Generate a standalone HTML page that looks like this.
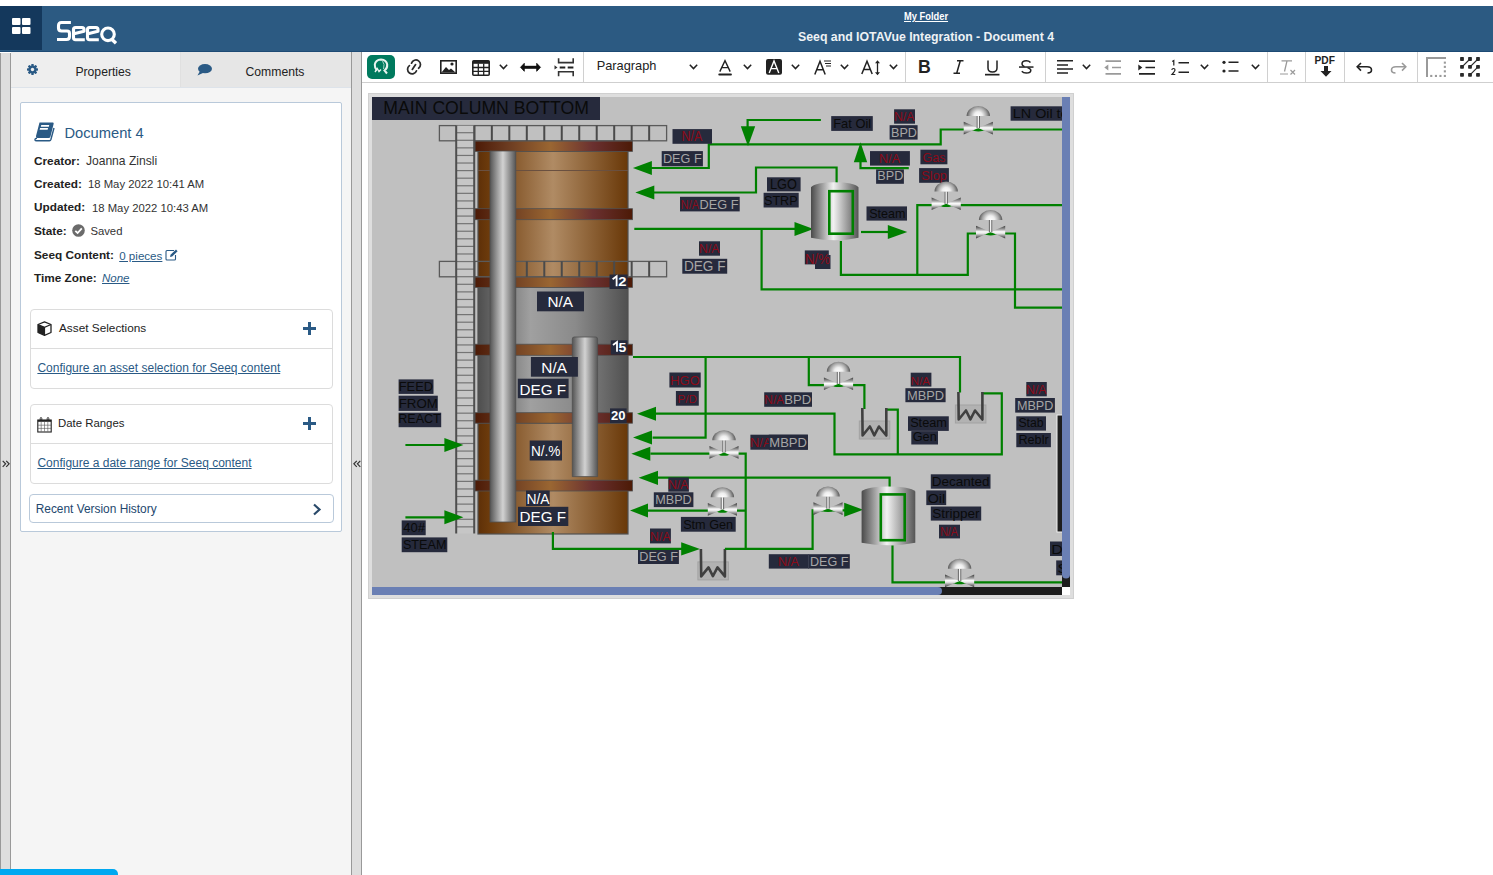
<!DOCTYPE html>
<html><head><meta charset="utf-8"><title>Seeq</title>
<style>
html,body{margin:0;padding:0;}
body{width:1493px;height:875px;overflow:hidden;position:relative;background:#fff;font-family:"Liberation Sans", sans-serif;}
.t{position:absolute;white-space:nowrap;}
.b{position:absolute;box-sizing:border-box;}
.s{position:absolute;overflow:visible;}
</style></head><body>
<div class="b" style="left:0px;top:6px;width:1493px;height:46px;background:#2c5a82;"></div>
<div class="b" style="left:0px;top:51px;width:1493px;height:1px;background:#1d4a74;"></div>
<div class="b" style="left:0px;top:6px;width:42px;height:44px;background:#14385c;"></div>
<svg class="s" style="left:12px;top:18px;" width="19" height="16" viewBox="0 0 19 16"><rect x="0" y="0" width="8.5" height="7" rx="1" fill="#fff"/><rect x="10" y="0" width="8.5" height="7" rx="1" fill="#fff"/><rect x="0" y="9" width="8.5" height="7" rx="1" fill="#fff"/><rect x="10" y="9" width="8.5" height="7" rx="1" fill="#fff"/></svg>
<svg class="s" style="left:57px;top:20px;" width="62" height="25" viewBox="0 0 62 25"><g fill="none" stroke="#fff" stroke-width="3.1" stroke-linejoin="round">
<path d="M13.9 2.5 H4.5 Q1.5 2.5 1.5 5.5 V8 Q1.5 11 4.5 11 H10 Q12.5 11 12.5 13.5 V16.5 Q12.5 19.5 9.5 19.5 H0"/>
<path d="M27.8 19.7 H18.5 Q16.5 19.7 16.5 17.5 V9.5 Q16.5 7.5 18.5 7.5 H25 Q27 7.5 27 9.5 V11.2 L17 13.8"/>
<path d="M41.8 19.7 H32.5 Q30.5 19.7 30.5 17.5 V9.5 Q30.5 7.5 32.5 7.5 H39 Q41 7.5 41 9.5 V11.2 L31 13.8"/>
<circle cx="51" cy="14.3" r="6.3"/>
<path d="M54.5 19 L59 23.3" stroke-width="3.3"/>
</g>
<path d="M52.5 9.3 A 5 5 0 0 1 52.5 19.3" fill="none" stroke="#fff" stroke-width="0.8"/></svg>
<div class="t" style="left:904.00px;top:11.23px;font-size:10.6px;line-height:10.6px;color:#fff;font-weight:bold;font-style:normal;text-decoration:underline;transform:scaleX(0.88);transform-origin:0 0;">My Folder</div>
<div class="t" style="left:798.00px;top:30.59px;font-size:12.3px;line-height:12.3px;color:#eef2f5;font-weight:bold;font-style:normal;text-decoration:none;">Seeq and IOTAVue Integration - Document 4</div>
<div class="b" style="left:0px;top:52px;width:11px;height:823px;background:#dedede;border-left:1px solid #999;border-right:1px solid #999;"></div>
<div class="b" style="left:0px;top:52px;width:11px;height:1px;background:#fff;"></div>
<div class="b" style="left:11px;top:53px;width:340px;height:822px;background:#f5f5f5;"></div>
<div class="b" style="left:11px;top:52px;width:170px;height:35px;background:#eeeeee;border-right:1px solid #e0e0e0;"></div>
<div class="b" style="left:181px;top:52px;width:170px;height:36px;background:#e6e6e6;"></div>
<div class="b" style="left:11px;top:87px;width:340px;height:1px;background:#dde3ea;"></div>
<svg class="s" style="left:27px;top:64px;" width="11" height="11" viewBox="0 0 11 11"><g fill="#2a5a85"><circle cx="5.5" cy="5.5" r="3.9"/><rect x="4.3" y="0" width="2.4" height="11" rx="0.6" transform="rotate(0 5.5 5.5)"/><rect x="4.3" y="0" width="2.4" height="11" rx="0.6" transform="rotate(45 5.5 5.5)"/><rect x="4.3" y="0" width="2.4" height="11" rx="0.6" transform="rotate(90 5.5 5.5)"/><rect x="4.3" y="0" width="2.4" height="11" rx="0.6" transform="rotate(135 5.5 5.5)"/></g><circle cx="5.5" cy="5.5" r="1.7" fill="#eeeeee"/></svg>
<div class="t" style="left:75.40px;top:65.67px;font-size:12.2px;line-height:12.2px;color:#222;font-weight:normal;font-style:normal;text-decoration:none;">Properties</div>
<svg class="s" style="left:197px;top:64px;" width="15" height="12" viewBox="0 0 15 12"><ellipse cx="8" cy="4.7" rx="7" ry="4.6" fill="#2a5a85"/><path d="M3 7 L0.5 11.5 L7 8.5 Z" fill="#2a5a85"/></svg>
<div class="t" style="left:245.50px;top:65.67px;font-size:12.2px;line-height:12.2px;color:#222;font-weight:normal;font-style:normal;text-decoration:none;">Comments</div>
<div class="b" style="left:351px;top:52px;width:11px;height:823px;background:#dedede;border-left:1px solid #999;border-right:1px solid #999;"></div>
<svg class="s" style="left:353px;top:459.5px;" width="8" height="8" viewBox="0 0 8 8"><path d="M3.8 0.8 L0.9 3.8 L3.8 6.8 M7.3 0.8 L4.4 3.8 L7.3 6.8" fill="none" stroke="#333" stroke-width="1.2"/></svg>
<svg class="s" style="left:2px;top:459.5px;" width="8" height="8" viewBox="0 0 8 8"><path d="M0.7 0.8 L3.6 3.8 L0.7 6.8 M4.2 0.8 L7.1 3.8 L4.2 6.8" fill="none" stroke="#333" stroke-width="1.2"/></svg>
<div class="b" style="left:20px;top:102px;width:322px;height:430px;background:#fff;border:1px solid #b9c9da;border-radius:2px;"></div>
<svg class="s" style="left:34px;top:122px;" width="21" height="19" viewBox="0 0 21 19"><path d="M5.5 0.5 H19 Q20 0.5 19.6 2 L16.5 14.5 Q16 16 14.5 16 H3.5 Q1.5 16 2 14 Z" fill="#2a5a85"/>
<rect x="8" y="3" width="8" height="1.8" fill="#fff" transform="skewX(-14)" />
<rect x="7.6" y="6" width="8" height="1.8" fill="#fff" transform="skewX(-14)"/>
<path d="M3 16.3 Q0.8 16.3 1 18 Q1.2 18.8 2.6 18.8 H15.5 Q16.5 18.8 16.9 17.5 L20 6" fill="none" stroke="#2a5a85" stroke-width="1.4"/></svg>
<div class="t" style="left:64.50px;top:126.26px;font-size:14.7px;line-height:14.7px;color:#2a5a85;font-weight:normal;font-style:normal;text-decoration:none;">Document 4</div>
<div class="t" style="left:34.00px;top:155.61px;font-size:11.8px;line-height:11.8px;color:#222;font-weight:bold;font-style:normal;text-decoration:none;">Creator:</div>
<div class="t" style="left:85.90px;top:155.36px;font-size:12.1px;line-height:12.1px;color:#333;font-weight:normal;font-style:normal;text-decoration:none;">Joanna Zinsli</div>
<div class="t" style="left:34.00px;top:179.01px;font-size:11.8px;line-height:11.8px;color:#222;font-weight:bold;font-style:normal;text-decoration:none;">Created:</div>
<div class="t" style="left:88.00px;top:179.43px;font-size:11.3px;line-height:11.3px;color:#333;font-weight:normal;font-style:normal;text-decoration:none;">18 May 2022 10:41 AM</div>
<div class="t" style="left:34.00px;top:202.41px;font-size:11.8px;line-height:11.8px;color:#222;font-weight:bold;font-style:normal;text-decoration:none;">Updated:</div>
<div class="t" style="left:92.00px;top:202.83px;font-size:11.3px;line-height:11.3px;color:#333;font-weight:normal;font-style:normal;text-decoration:none;">18 May 2022 10:43 AM</div>
<div class="t" style="left:34.00px;top:226.01px;font-size:11.8px;line-height:11.8px;color:#222;font-weight:bold;font-style:normal;text-decoration:none;">State:</div>
<div class="t" style="left:34.00px;top:250.01px;font-size:11.8px;line-height:11.8px;color:#222;font-weight:bold;font-style:normal;text-decoration:none;">Seeq Content:</div>
<div class="t" style="left:34.00px;top:273.21px;font-size:11.8px;line-height:11.8px;color:#222;font-weight:bold;font-style:normal;text-decoration:none;">Time Zone:</div>
<svg class="s" style="left:72px;top:224px;" width="13" height="13" viewBox="0 0 13 13"><circle cx="6.5" cy="6.5" r="6.3" fill="#6b6b6b"/><path d="M3.3 6.8 L5.6 9 L9.8 4.3" fill="none" stroke="#fff" stroke-width="1.8"/></svg>
<div class="t" style="left:90.40px;top:226.43px;font-size:11.3px;line-height:11.3px;color:#333;font-weight:normal;font-style:normal;text-decoration:none;">Saved</div>
<div class="t" style="left:119.20px;top:250.18px;font-size:11.6px;line-height:11.6px;color:#2a5a85;font-weight:normal;font-style:normal;text-decoration:underline;">0 pieces</div>
<svg class="s" style="left:165px;top:249px;" width="13" height="12" viewBox="0 0 13 12"><path d="M9 1.5 H2 Q1 1.5 1 2.5 V10 Q1 11 2 11 H9.5 Q10.5 11 10.5 10 V6" fill="none" stroke="#2a5a85" stroke-width="1.1"/><path d="M5 8 L5.5 5.8 L11 0.6 L12.6 2.2 L7.2 7.5 Z" fill="#2a5a85"/></svg>
<div class="t" style="left:102.00px;top:273.47px;font-size:11.5px;line-height:11.5px;color:#2a5a85;font-weight:normal;font-style:italic;text-decoration:underline;">None</div>
<div class="b" style="left:30px;top:309px;width:303px;height:80px;background:#fff;border:1px solid #dcdcdc;border-radius:4px;"></div>
<div class="b" style="left:31px;top:348px;width:301px;height:1px;background:#dcdcdc;"></div>
<svg class="s" style="left:37px;top:321px;" width="15" height="15" viewBox="0 0 15 15"><path d="M7.5 0.8 L14 3.5 V11.5 L7.5 14.3 L1 11.5 V3.5 Z" fill="none" stroke="#222" stroke-width="1.3" stroke-linejoin="round"/><path d="M1 3.5 L7.5 6.3 L14 3.5 M7.5 6.3 V14.3" fill="none" stroke="#222" stroke-width="1.2"/><path d="M1 3.5 L7.5 6.3 V14.3 L1 11.5 Z" fill="#222"/></svg>
<div class="t" style="left:59.00px;top:323.01px;font-size:11.8px;line-height:11.8px;color:#222;font-weight:normal;font-style:normal;text-decoration:none;">Asset Selections</div>
<svg class="s" style="left:303px;top:322px;" width="13" height="13" viewBox="0 0 13 13"><path d="M6.5 0 V13 M0 6.5 H13" stroke="#2a5a85" stroke-width="3"/></svg>
<div class="t" style="left:37.40px;top:361.84px;font-size:12.0px;line-height:12.0px;color:#2a5a85;font-weight:normal;font-style:normal;text-decoration:underline;">Configure an asset selection for Seeq content</div>
<div class="b" style="left:30px;top:404px;width:303px;height:80px;background:#fff;border:1px solid #dcdcdc;border-radius:4px;"></div>
<div class="b" style="left:31px;top:443px;width:301px;height:1px;background:#dcdcdc;"></div>
<svg class="s" style="left:37px;top:417px;" width="15" height="15" viewBox="0 0 15 15"><rect x="0.8" y="3" width="13.4" height="12" fill="none" stroke="#222" stroke-width="1.1"/><rect x="0.8" y="3" width="13.4" height="1.8" fill="#222"/><path d="M3.2 4 V1.5 Q3.2 0.5 4 0.5 Q4.8 0.5 4.8 1.5 V4 M10.2 4 V1.5 Q10.2 0.5 11 0.5 Q11.8 0.5 11.8 1.5 V4" fill="none" stroke="#222" stroke-width="0.9"/><path d="M4.2 5 V14.5 M7.5 5 V14.5 M10.8 5 V14.5 M0.8 8.2 H14.2 M0.8 11.4 H14.2" stroke="#555" stroke-width="0.6"/></svg>
<div class="t" style="left:58.00px;top:418.35px;font-size:11.4px;line-height:11.4px;color:#222;font-weight:normal;font-style:normal;text-decoration:none;">Date Ranges</div>
<svg class="s" style="left:303px;top:417px;" width="13" height="13" viewBox="0 0 13 13"><path d="M6.5 0 V13 M0 6.5 H13" stroke="#2a5a85" stroke-width="3"/></svg>
<div class="t" style="left:37.40px;top:456.84px;font-size:12.0px;line-height:12.0px;color:#2a5a85;font-weight:normal;font-style:normal;text-decoration:underline;">Configure a date range for Seeq content</div>
<div class="b" style="left:29px;top:494px;width:305px;height:29px;background:#fff;border:1px solid #b9c9da;border-radius:4px;"></div>
<div class="t" style="left:35.70px;top:503.63px;font-size:11.9px;line-height:11.9px;color:#23476e;font-weight:normal;font-style:normal;text-decoration:none;">Recent Version History</div>
<svg class="s" style="left:312px;top:503px;" width="10" height="13" viewBox="0 0 10 13"><path d="M2 1.5 L7.5 6.5 L2 11.5" fill="none" stroke="#2a4a6a" stroke-width="2.2"/></svg>
<div class="b" style="left:0px;top:869px;width:118px;height:10px;background:#00a8f0;border-radius:0 5px 0 0;"></div>
<div class="b" style="left:362px;top:52px;width:1131px;height:30px;background:#fff;"></div>
<div class="b" style="left:362px;top:82px;width:1131px;height:1px;background:#cfcfcf;"></div>
<div class="b" style="left:367px;top:55px;width:28px;height:24px;background:#007a5e;border-radius:5px;"></div>
<svg class="s" style="left:373px;top:58px;" width="16" height="17" viewBox="0 0 16 17"><path d="M4 12.5 Q1.5 10 1.8 6.5 Q2.5 1.8 8 1.5 Q13.5 1.8 14.2 6.5 Q14.5 10.5 11.5 12.5 L14 15.5" fill="none" stroke="#e8f3ef" stroke-width="2"/><path d="M2 14 L4.3 10.5 L6 13.5 L8 11.5" fill="none" stroke="#e8f3ef" stroke-width="1.4"/><path d="M9.5 3 Q12 6 10.5 11" fill="none" stroke="#9fd0c0" stroke-width="1"/></svg>
<svg class="s" style="left:404px;top:57px;" width="20" height="20" viewBox="0 0 20 20"><g fill="none" stroke="#2c2c2c" stroke-width="1.75" stroke-linecap="round"><path d="M7.5 6.2 A4.6 4.6 0 1 1 14.6 11.3"/><path d="M12.5 13.8 A4.6 4.6 0 1 1 5.4 8.6"/><path d="M8.3 12.4 L11.6 7.6"/></g></svg>
<svg class="s" style="left:440px;top:60px;" width="17" height="14" viewBox="0 0 17 14"><rect x="0.8" y="0.8" width="15.4" height="12.4" fill="none" stroke="#222" stroke-width="1.6"/><path d="M1.5 12.5 L6 7 L9 10 L11 8.5 L15.5 12.5 Z" fill="#222"/><circle cx="12" cy="4" r="1.6" fill="#222"/></svg>
<svg class="s" style="left:472px;top:59.5px;" width="18" height="16" viewBox="0 0 18 16"><rect x="0.8" y="0.8" width="16.4" height="14.4" rx="1" fill="none" stroke="#222" stroke-width="1.6"/><rect x="0.8" y="0.8" width="16.4" height="3" fill="#222"/><path d="M6.3 3.5 V15 M11.7 3.5 V15 M0.8 7.5 H17 M0.8 11.3 H17" stroke="#222" stroke-width="1.3"/></svg>
<svg class="s" style="left:498.5px;top:64.3px;" width="9" height="6" viewBox="0 0 9 6"><path d="M0.8 0.8 L4.5 4.6 L8.2 0.8" fill="none" stroke="#222" stroke-width="1.5"/></svg>
<svg class="s" style="left:519.5px;top:62.5px;" width="21" height="9" viewBox="0 0 21 9"><path d="M3 4.3 H18" stroke="#111" stroke-width="3"/><path d="M0.5 4.3 L4.3 0.3 V8.3 Z M20.5 4.3 L16.7 0.3 V8.3 Z" fill="#111" stroke="#111" stroke-width="0.8" stroke-linejoin="round"/></svg>
<svg class="s" style="left:553.5px;top:57.5px;" width="21" height="19" viewBox="0 0 21 19"><g stroke="#333" stroke-width="1.6" fill="none"><path d="M4.6 0.3 V4.6 H19.2 V0.3"/><path d="M4.6 18.3 V13.8 H19.2 V18.3"/></g><path d="M5.7 9.5 H11.3 M13.7 9.5 H19.4" stroke="#222" stroke-width="1.8"/><path d="M0.5 7.3 L3.5 9.4 L0.5 11.5 Z" fill="#333"/></svg>
<div class="b" style="left:583px;top:52px;width:1px;height:30px;background:#d0d0d0;"></div>
<div class="t" style="left:596.70px;top:59.96px;font-size:12.8px;line-height:12.8px;color:#222;font-weight:normal;font-style:normal;text-decoration:none;">Paragraph</div>
<svg class="s" style="left:688.5px;top:64.3px;" width="9" height="6" viewBox="0 0 9 6"><path d="M0.8 0.8 L4.5 4.6 L8.2 0.8" fill="none" stroke="#222" stroke-width="1.5"/></svg>
<svg class="s" style="left:718px;top:60px;" width="15" height="16" viewBox="0 0 15 16"><path d="M1.8 11.6 L7 0.6 L12.2 11.6 M3.5 7.6 H10.5" fill="none" stroke="#222" stroke-width="1.4"/><rect x="0.3" y="13.5" width="13.6" height="1.9" rx="0.9" fill="#222"/></svg>
<svg class="s" style="left:742.8px;top:64.3px;" width="9" height="6" viewBox="0 0 9 6"><path d="M0.8 0.8 L4.5 4.6 L8.2 0.8" fill="none" stroke="#222" stroke-width="1.5"/></svg>
<svg class="s" style="left:766px;top:59px;" width="16" height="16" viewBox="0 0 16 16"><rect x="0" y="0" width="16" height="15.8" rx="2" fill="#222"/><path d="M3.2 14 L8 2 L12.8 14 M4.9 9.6 H11.1" fill="none" stroke="#fff" stroke-width="1.4"/></svg>
<svg class="s" style="left:790.8px;top:64.3px;" width="9" height="6" viewBox="0 0 9 6"><path d="M0.8 0.8 L4.5 4.6 L8.2 0.8" fill="none" stroke="#222" stroke-width="1.5"/></svg>
<svg class="s" style="left:814px;top:59.5px;" width="18" height="15" viewBox="0 0 18 15"><path d="M0.8 14.5 L6 1.2 L11.2 14.5 M2.7 9.8 H9.3" fill="none" stroke="#222" stroke-width="1.5"/><path d="M10 1 H17 M11 3.5 H17 M12 6 H17" stroke="#222" stroke-width="1.1"/></svg>
<svg class="s" style="left:839.7px;top:64.3px;" width="9" height="6" viewBox="0 0 9 6"><path d="M0.8 0.8 L4.5 4.6 L8.2 0.8" fill="none" stroke="#222" stroke-width="1.5"/></svg>
<svg class="s" style="left:861px;top:59.5px;" width="21" height="16" viewBox="0 0 21 16"><path d="M0.8 14 L6 1.2 L11.2 14 M2.7 9.5 H9.3" fill="none" stroke="#222" stroke-width="1.5"/><path d="M16.5 2 V13.5" stroke="#222" stroke-width="1.3"/><path d="M14 3.2 L16.5 0.2 L19 3.2 Z M14 12.3 L16.5 15.3 L19 12.3 Z" fill="#222"/></svg>
<svg class="s" style="left:888.9px;top:64.3px;" width="9" height="6" viewBox="0 0 9 6"><path d="M0.8 0.8 L4.5 4.6 L8.2 0.8" fill="none" stroke="#222" stroke-width="1.5"/></svg>
<div class="b" style="left:905px;top:52px;width:1px;height:30px;background:#d0d0d0;"></div>
<div class="t" style="left:918.30px;top:58.16px;font-size:18.6px;line-height:18.6px;color:#222;font-weight:bold;font-style:normal;text-decoration:none;transform:scaleX(0.95);transform-origin:0 0;">B</div>
<svg class="s" style="left:952.5px;top:60px;" width="11" height="14" viewBox="0 0 11 14"><path d="M4 0.8 H10.5 M0.5 13.2 H7 M7.3 0.8 L3.7 13.2" stroke="#222" stroke-width="1.5" fill="none"/></svg>
<svg class="s" style="left:985px;top:60px;" width="15" height="16" viewBox="0 0 15 16"><path d="M3 0.5 V8 Q3 12 7.5 12 Q12 12 12 8 V0.5" fill="none" stroke="#222" stroke-width="1.5"/><rect x="0" y="13.8" width="14.5" height="1.7" fill="#222"/></svg>
<svg class="s" style="left:1019px;top:60px;" width="15" height="14" viewBox="0 0 15 14"><path d="M11.5 2.5 Q10 0.8 7.3 0.8 Q3 0.8 3 4 Q3 5.8 5.5 6.6" fill="none" stroke="#222" stroke-width="1.5"/><path d="M8.5 7.6 Q11.8 8.6 11.8 10.2 Q11.8 13 7.3 13 Q4.2 13 2.8 11.2" fill="none" stroke="#222" stroke-width="1.5"/><rect x="0" y="6.3" width="14.5" height="1.5" fill="#222"/></svg>
<div class="b" style="left:1045px;top:52px;width:1px;height:30px;background:#d0d0d0;"></div>
<svg class="s" style="left:1057px;top:60px;" width="17" height="14" viewBox="0 0 17 14"><path d="M0 0.8 H16 M0 5 H11 M0 9 H16 M0 13 H11" stroke="#222" stroke-width="1.5"/></svg>
<svg class="s" style="left:1081.5px;top:64.3px;" width="9" height="6" viewBox="0 0 9 6"><path d="M0.8 0.8 L4.5 4.6 L8.2 0.8" fill="none" stroke="#222" stroke-width="1.5"/></svg>
<svg class="s" style="left:1104px;top:60px;" width="18" height="16" viewBox="0 0 18 16"><path d="M1.5 1.2 H17 M8 7.5 H17 M1.5 13.8 H17" stroke="#9a9a9a" stroke-width="1.7"/><path d="M0.3 7.5 L4.3 4.6 V10.4 Z" fill="#9a9a9a"/></svg>
<svg class="s" style="left:1138px;top:60px;" width="18" height="16" viewBox="0 0 18 16"><path d="M1 1.2 H17 M7.5 7.5 H17 M1 13.8 H17" stroke="#222" stroke-width="1.7"/><path d="M0.3 4.6 L4.3 7.5 L0.3 10.4 Z" fill="#222"/></svg>
<svg class="s" style="left:1171px;top:59.5px;" width="19" height="16" viewBox="0 0 19 16"><path d="M7.5 2.8 H18 M7.5 12.3 H18" stroke="#222" stroke-width="1.5"/><path d="M1.2 1.5 L2.8 0.5 V5.5" fill="none" stroke="#222" stroke-width="1.2"/><path d="M0.8 10 Q1 8.5 2.5 8.5 Q4 8.5 4 10 Q4 11 1 14.5 H4.3" fill="none" stroke="#222" stroke-width="1.2"/></svg>
<svg class="s" style="left:1199.8px;top:64.3px;" width="9" height="6" viewBox="0 0 9 6"><path d="M0.8 0.8 L4.5 4.6 L8.2 0.8" fill="none" stroke="#222" stroke-width="1.5"/></svg>
<svg class="s" style="left:1222px;top:60px;" width="17" height="14" viewBox="0 0 17 14"><path d="M6.5 2.3 H16.5 M6.5 11 H16.5" stroke="#222" stroke-width="1.5"/><circle cx="2" cy="2.3" r="1.6" fill="#222"/><circle cx="2" cy="11" r="1.6" fill="#222"/></svg>
<svg class="s" style="left:1250.7px;top:64.3px;" width="9" height="6" viewBox="0 0 9 6"><path d="M0.8 0.8 L4.5 4.6 L8.2 0.8" fill="none" stroke="#222" stroke-width="1.5"/></svg>
<div class="b" style="left:1267px;top:52px;width:1px;height:30px;background:#d0d0d0;"></div>
<svg class="s" style="left:1279.5px;top:60px;" width="17" height="16" viewBox="0 0 17 16"><path d="M1.5 0.8 H12 M7 0.8 L4.5 11.5" stroke="#9a9a9a" stroke-width="1.3" fill="none"/><path d="M0 14 H8" stroke="#9a9a9a" stroke-width="1"/><path d="M10.5 10 L15 14.5 M15 10 L10.5 14.5" stroke="#9a9a9a" stroke-width="1.2"/></svg>
<div class="b" style="left:1305px;top:52px;width:1px;height:30px;background:#d0d0d0;"></div>
<div class="t" style="left:1314.50px;top:56.07px;font-size:10.2px;line-height:10.2px;color:#222;font-weight:bold;font-style:normal;text-decoration:none;">PDF</div>
<svg class="s" style="left:1319.5px;top:66px;" width="12" height="11" viewBox="0 0 12 11"><path d="M4 0 H8 V5 H11.5 L6 10.8 L0.5 5 H4 Z" fill="#222"/></svg>
<div class="b" style="left:1344px;top:52px;width:1px;height:30px;background:#d0d0d0;"></div>
<svg class="s" style="left:1356px;top:61.5px;" width="17" height="12" viewBox="0 0 17 12"><path d="M5 1 L1.2 4.8 L5 8.6" fill="none" stroke="#222" stroke-width="1.6"/><path d="M1.5 4.8 H11 Q15.5 4.8 15.5 8 Q15.5 11 11.5 11" fill="none" stroke="#222" stroke-width="1.6"/></svg>
<svg class="s" style="left:1389.5px;top:61.5px;" width="17" height="12" viewBox="0 0 17 12"><path d="M12 1 L15.8 4.8 L12 8.6" fill="none" stroke="#9a9a9a" stroke-width="1.6"/><path d="M15.5 4.8 H6 Q1.5 4.8 1.5 8 Q1.5 11 5.5 11" fill="none" stroke="#9a9a9a" stroke-width="1.6"/></svg>
<div class="b" style="left:1417px;top:52px;width:1px;height:30px;background:#d0d0d0;"></div>
<svg class="s" style="left:1426px;top:57px;" width="21" height="21" viewBox="0 0 21 21"><path d="M1 20 V1 H20" fill="none" stroke="#9a9a9a" stroke-width="2"/><rect x="4.2" y="17.9" width="2.1" height="2.1" fill="#9a9a9a"/><rect x="8.9" y="17.9" width="2.1" height="2.1" fill="#9a9a9a"/><rect x="13.4" y="17.9" width="2.1" height="2.1" fill="#9a9a9a"/><rect x="17.8" y="17.9" width="2.1" height="2.1" fill="#9a9a9a"/><rect x="17.8" y="4.6" width="2.1" height="2.1" fill="#9a9a9a"/><rect x="17.8" y="8.8" width="2.1" height="2.1" fill="#9a9a9a"/><rect x="17.8" y="13.3" width="2.1" height="2.1" fill="#9a9a9a"/></svg>
<svg class="s" style="left:1460px;top:57px;" width="21" height="21" viewBox="0 0 21 21"><rect x="0.10000000000000009" y="0.10000000000000009" width="3.8" height="3.8" rx="0.7" fill="#2a2a2a"/><rect x="0.10000000000000009" y="8.0" width="3.8" height="3.8" rx="0.7" fill="#2a2a2a"/><rect x="0.10000000000000009" y="15.999999999999998" width="3.8" height="3.8" rx="0.7" fill="#2a2a2a"/><rect x="8.1" y="0.10000000000000009" width="3.8" height="3.8" rx="0.7" fill="#2a2a2a"/><rect x="8.1" y="8.0" width="3.8" height="3.8" rx="0.7" fill="#2a2a2a"/><rect x="8.1" y="15.999999999999998" width="3.8" height="3.8" rx="0.7" fill="#2a2a2a"/><rect x="16.1" y="0.10000000000000009" width="3.8" height="3.8" rx="0.7" fill="#2a2a2a"/><rect x="16.1" y="8.0" width="3.8" height="3.8" rx="0.7" fill="#2a2a2a"/><rect x="16.1" y="15.999999999999998" width="3.8" height="3.8" rx="0.7" fill="#2a2a2a"/><path d="M2 9.9 L10 2 M10 9.9 L18 2 M10 17.9 L18 9.9" stroke="#2a2a2a" stroke-width="1.2"/></svg>
<div class="b" style="left:368px;top:93px;width:706px;height:506px;background:#dedede;border:1px solid #d0d0d0;"></div>
<svg class="s" style="left:0;top:0" width="1493" height="875" viewBox="0 0 1493 875" font-family="Liberation Sans, sans-serif"><defs>
<clipPath id="clip"><rect x="372" y="97" width="690" height="490"/></clipPath>
<linearGradient id="brown" x1="0" x2="1" y1="0" y2="0">
 <stop offset="0" stop-color="#5e3008"/><stop offset="0.08" stop-color="#6e3c0c"/><stop offset="0.5" stop-color="#b08b64"/><stop offset="1" stop-color="#693808"/></linearGradient>
<linearGradient id="band" x1="0" x2="1" y1="0" y2="0">
 <stop offset="0" stop-color="#4c1a06"/><stop offset="0.2" stop-color="#6a3a20"/><stop offset="0.48" stop-color="#9a6632"/><stop offset="0.75" stop-color="#6a3030"/><stop offset="1" stop-color="#4c1a06"/></linearGradient>
<linearGradient id="grayc" x1="0" x2="1" y1="0" y2="0">
 <stop offset="0" stop-color="#4e4e4e"/><stop offset="0.35" stop-color="#a0a0a0"/><stop offset="0.65" stop-color="#8a8a8a"/><stop offset="1" stop-color="#505050"/></linearGradient>
<linearGradient id="pipe" x1="0" x2="1" y1="0" y2="0">
 <stop offset="0" stop-color="#555"/><stop offset="0.5" stop-color="#d2d2d2"/><stop offset="1" stop-color="#555"/></linearGradient>
<linearGradient id="tank" x1="0" x2="1" y1="0" y2="0">
 <stop offset="0" stop-color="#4a4a4a"/><stop offset="0.47" stop-color="#f2f2f2"/><stop offset="1" stop-color="#555"/></linearGradient>
<linearGradient id="vbody" x1="0" x2="0" y1="0" y2="1">
 <stop offset="0" stop-color="#3a3a3a"/><stop offset="0.3" stop-color="#a8a8a8"/><stop offset="0.47" stop-color="#fafafa"/><stop offset="0.6" stop-color="#e8e8e8"/><stop offset="1" stop-color="#333"/></linearGradient>
<radialGradient id="dome" cx="0.5" cy="1" r="0.5" gradientTransform="translate(0 -1.4) scale(1 2.4)">
 <stop offset="0" stop-color="#ffffff"/><stop offset="0.35" stop-color="#eeeeee"/><stop offset="0.72" stop-color="#a4a4a4"/><stop offset="1" stop-color="#585858"/></radialGradient>
</defs><rect x="372" y="97" width="690" height="490" fill="#c0c0c0"/><g clip-path="url(#clip)"><rect x="372.0" y="97.0" width="228.0" height="23.0" fill="#262a3c"/><text x="383.39" y="113.60" font-size="17.60" fill="#0a0a0a" textLength="205.49" lengthAdjust="spacingAndGlyphs">MAIN COLUMN BOTTOM</text><rect x="478" y="151" width="150" height="136" fill="url(#brown)" stroke="#505050" stroke-width="1.2"/><line x1="478" y1="170.5" x2="628" y2="170.5" stroke="#6a5040" stroke-width="1"/><rect x="478" y="287" width="150" height="136" fill="url(#grayc)" stroke="#505050" stroke-width="1.2"/><rect x="478" y="423" width="150" height="111" fill="url(#brown)" stroke="#505050" stroke-width="1.2"/><rect x="475" y="140.8" width="157.5" height="10.6" fill="url(#band)" stroke="#505050" stroke-width="0.8"/><rect x="475" y="208.7" width="157.5" height="11.0" fill="url(#band)" stroke="#505050" stroke-width="0.8"/><rect x="475" y="276.8" width="157.5" height="10.6" fill="url(#band)" stroke="#505050" stroke-width="0.8"/><rect x="475" y="344.2" width="157.5" height="11.1" fill="url(#band)" stroke="#505050" stroke-width="0.8"/><rect x="475" y="412.7" width="157.5" height="10.5" fill="url(#band)" stroke="#505050" stroke-width="0.8"/><rect x="475" y="480.2" width="157.5" height="10.8" fill="url(#band)" stroke="#505050" stroke-width="0.8"/><rect x="439.4" y="125.6" width="227.2" height="15.2" fill="none" stroke="#5a5a5a" stroke-width="1.3"/><line x1="456.88" y1="125.6" x2="456.88" y2="140.8" stroke="#4a4a4a" stroke-width="2"/><line x1="474.36" y1="125.6" x2="474.36" y2="140.8" stroke="#4a4a4a" stroke-width="2"/><line x1="491.84" y1="125.6" x2="491.84" y2="140.8" stroke="#4a4a4a" stroke-width="2"/><line x1="509.32" y1="125.6" x2="509.32" y2="140.8" stroke="#4a4a4a" stroke-width="2"/><line x1="526.80" y1="125.6" x2="526.80" y2="140.8" stroke="#4a4a4a" stroke-width="2"/><line x1="544.28" y1="125.6" x2="544.28" y2="140.8" stroke="#4a4a4a" stroke-width="2"/><line x1="561.76" y1="125.6" x2="561.76" y2="140.8" stroke="#4a4a4a" stroke-width="2"/><line x1="579.24" y1="125.6" x2="579.24" y2="140.8" stroke="#4a4a4a" stroke-width="2"/><line x1="596.72" y1="125.6" x2="596.72" y2="140.8" stroke="#4a4a4a" stroke-width="2"/><line x1="614.20" y1="125.6" x2="614.20" y2="140.8" stroke="#4a4a4a" stroke-width="2"/><line x1="631.68" y1="125.6" x2="631.68" y2="140.8" stroke="#4a4a4a" stroke-width="2"/><line x1="649.16" y1="125.6" x2="649.16" y2="140.8" stroke="#4a4a4a" stroke-width="2"/><rect x="439.4" y="261.4" width="227.2" height="15.4" fill="none" stroke="#5a5a5a" stroke-width="1.3"/><line x1="456.88" y1="261.4" x2="456.88" y2="276.8" stroke="#4a4a4a" stroke-width="2"/><line x1="474.36" y1="261.4" x2="474.36" y2="276.8" stroke="#4a4a4a" stroke-width="2"/><line x1="491.84" y1="261.4" x2="491.84" y2="276.8" stroke="#4a4a4a" stroke-width="2"/><line x1="509.32" y1="261.4" x2="509.32" y2="276.8" stroke="#4a4a4a" stroke-width="2"/><line x1="526.80" y1="261.4" x2="526.80" y2="276.8" stroke="#4a4a4a" stroke-width="2"/><line x1="544.28" y1="261.4" x2="544.28" y2="276.8" stroke="#4a4a4a" stroke-width="2"/><line x1="561.76" y1="261.4" x2="561.76" y2="276.8" stroke="#4a4a4a" stroke-width="2"/><line x1="579.24" y1="261.4" x2="579.24" y2="276.8" stroke="#4a4a4a" stroke-width="2"/><line x1="596.72" y1="261.4" x2="596.72" y2="276.8" stroke="#4a4a4a" stroke-width="2"/><line x1="614.20" y1="261.4" x2="614.20" y2="276.8" stroke="#4a4a4a" stroke-width="2"/><line x1="631.68" y1="261.4" x2="631.68" y2="276.8" stroke="#4a4a4a" stroke-width="2"/><line x1="649.16" y1="261.4" x2="649.16" y2="276.8" stroke="#4a4a4a" stroke-width="2"/><rect x="456.2" y="125.6" width="18" height="408" fill="#c6c6c6"/><line x1="456.2" y1="132.70" x2="474.2" y2="132.70" stroke="#747474" stroke-width="1.2"/><line x1="456.2" y1="140.28" x2="474.2" y2="140.28" stroke="#747474" stroke-width="1.2"/><line x1="456.2" y1="147.86" x2="474.2" y2="147.86" stroke="#747474" stroke-width="1.2"/><line x1="456.2" y1="155.44" x2="474.2" y2="155.44" stroke="#747474" stroke-width="1.2"/><line x1="456.2" y1="163.02" x2="474.2" y2="163.02" stroke="#747474" stroke-width="1.2"/><line x1="456.2" y1="170.60" x2="474.2" y2="170.60" stroke="#747474" stroke-width="1.2"/><line x1="456.2" y1="178.18" x2="474.2" y2="178.18" stroke="#747474" stroke-width="1.2"/><line x1="456.2" y1="185.76" x2="474.2" y2="185.76" stroke="#747474" stroke-width="1.2"/><line x1="456.2" y1="193.34" x2="474.2" y2="193.34" stroke="#747474" stroke-width="1.2"/><line x1="456.2" y1="200.92" x2="474.2" y2="200.92" stroke="#747474" stroke-width="1.2"/><line x1="456.2" y1="208.50" x2="474.2" y2="208.50" stroke="#747474" stroke-width="1.2"/><line x1="456.2" y1="216.08" x2="474.2" y2="216.08" stroke="#747474" stroke-width="1.2"/><line x1="456.2" y1="223.66" x2="474.2" y2="223.66" stroke="#747474" stroke-width="1.2"/><line x1="456.2" y1="231.24" x2="474.2" y2="231.24" stroke="#747474" stroke-width="1.2"/><line x1="456.2" y1="238.82" x2="474.2" y2="238.82" stroke="#747474" stroke-width="1.2"/><line x1="456.2" y1="246.40" x2="474.2" y2="246.40" stroke="#747474" stroke-width="1.2"/><line x1="456.2" y1="253.98" x2="474.2" y2="253.98" stroke="#747474" stroke-width="1.2"/><line x1="456.2" y1="261.56" x2="474.2" y2="261.56" stroke="#747474" stroke-width="1.2"/><line x1="456.2" y1="269.14" x2="474.2" y2="269.14" stroke="#747474" stroke-width="1.2"/><line x1="456.2" y1="276.72" x2="474.2" y2="276.72" stroke="#747474" stroke-width="1.2"/><line x1="456.2" y1="284.30" x2="474.2" y2="284.30" stroke="#747474" stroke-width="1.2"/><line x1="456.2" y1="291.88" x2="474.2" y2="291.88" stroke="#747474" stroke-width="1.2"/><line x1="456.2" y1="299.46" x2="474.2" y2="299.46" stroke="#747474" stroke-width="1.2"/><line x1="456.2" y1="307.04" x2="474.2" y2="307.04" stroke="#747474" stroke-width="1.2"/><line x1="456.2" y1="314.62" x2="474.2" y2="314.62" stroke="#747474" stroke-width="1.2"/><line x1="456.2" y1="322.20" x2="474.2" y2="322.20" stroke="#747474" stroke-width="1.2"/><line x1="456.2" y1="329.78" x2="474.2" y2="329.78" stroke="#747474" stroke-width="1.2"/><line x1="456.2" y1="337.36" x2="474.2" y2="337.36" stroke="#747474" stroke-width="1.2"/><line x1="456.2" y1="344.94" x2="474.2" y2="344.94" stroke="#747474" stroke-width="1.2"/><line x1="456.2" y1="352.52" x2="474.2" y2="352.52" stroke="#747474" stroke-width="1.2"/><line x1="456.2" y1="360.10" x2="474.2" y2="360.10" stroke="#747474" stroke-width="1.2"/><line x1="456.2" y1="367.68" x2="474.2" y2="367.68" stroke="#747474" stroke-width="1.2"/><line x1="456.2" y1="375.26" x2="474.2" y2="375.26" stroke="#747474" stroke-width="1.2"/><line x1="456.2" y1="382.84" x2="474.2" y2="382.84" stroke="#747474" stroke-width="1.2"/><line x1="456.2" y1="390.42" x2="474.2" y2="390.42" stroke="#747474" stroke-width="1.2"/><line x1="456.2" y1="398.00" x2="474.2" y2="398.00" stroke="#747474" stroke-width="1.2"/><line x1="456.2" y1="405.58" x2="474.2" y2="405.58" stroke="#747474" stroke-width="1.2"/><line x1="456.2" y1="413.16" x2="474.2" y2="413.16" stroke="#747474" stroke-width="1.2"/><line x1="456.2" y1="420.74" x2="474.2" y2="420.74" stroke="#747474" stroke-width="1.2"/><line x1="456.2" y1="428.32" x2="474.2" y2="428.32" stroke="#747474" stroke-width="1.2"/><line x1="456.2" y1="435.90" x2="474.2" y2="435.90" stroke="#747474" stroke-width="1.2"/><line x1="456.2" y1="443.48" x2="474.2" y2="443.48" stroke="#747474" stroke-width="1.2"/><line x1="456.2" y1="451.06" x2="474.2" y2="451.06" stroke="#747474" stroke-width="1.2"/><line x1="456.2" y1="458.64" x2="474.2" y2="458.64" stroke="#747474" stroke-width="1.2"/><line x1="456.2" y1="466.22" x2="474.2" y2="466.22" stroke="#747474" stroke-width="1.2"/><line x1="456.2" y1="473.80" x2="474.2" y2="473.80" stroke="#747474" stroke-width="1.2"/><line x1="456.2" y1="481.38" x2="474.2" y2="481.38" stroke="#747474" stroke-width="1.2"/><line x1="456.2" y1="488.96" x2="474.2" y2="488.96" stroke="#747474" stroke-width="1.2"/><line x1="456.2" y1="496.54" x2="474.2" y2="496.54" stroke="#747474" stroke-width="1.2"/><line x1="456.2" y1="504.12" x2="474.2" y2="504.12" stroke="#747474" stroke-width="1.2"/><line x1="456.2" y1="511.70" x2="474.2" y2="511.70" stroke="#747474" stroke-width="1.2"/><line x1="456.2" y1="519.28" x2="474.2" y2="519.28" stroke="#747474" stroke-width="1.2"/><line x1="456.2" y1="526.86" x2="474.2" y2="526.86" stroke="#747474" stroke-width="1.2"/><line x1="456.2" y1="125.6" x2="456.2" y2="533.6" stroke="#4e4e4e" stroke-width="2"/><line x1="474.2" y1="125.6" x2="474.2" y2="533.6" stroke="#4e4e4e" stroke-width="2"/><rect x="490" y="151" width="25.8" height="371" fill="url(#pipe)" stroke="#505050" stroke-width="0.8"/><path d="M572.3 476.6 V339 Q572.3 337 574.3 337 H595.6 Q597.6 337 597.6 339 V476.6 Z" fill="url(#pipe)" stroke="#505050" stroke-width="0.8"/><rect x="609.5" y="274.5" width="18.1" height="14.5" fill="#262a3c"/><path d="M612.6 279.2 L616.6 276.2 V286.3" fill="none" stroke="#fff" stroke-width="1.8"/><text x="618.18" y="286.30" font-size="13.69" fill="#ffffff" font-weight="bold" textLength="8.23" lengthAdjust="spacingAndGlyphs">2</text><rect x="610.8" y="340.3" width="16.7" height="14.4" fill="#262a3c"/><path d="M613 345 L617 342 V351.8" fill="none" stroke="#fff" stroke-width="1.8"/><text x="618.58" y="351.80" font-size="13.41" fill="#ffffff" font-weight="bold" textLength="7.79" lengthAdjust="spacingAndGlyphs">5</text><rect x="610.0" y="408.4" width="16.6" height="14.6" fill="#262a3c"/><text x="611.04" y="419.80" font-size="13.69" fill="#ffffff" font-weight="bold" textLength="14.51" lengthAdjust="spacingAndGlyphs">20</text><rect x="537.0" y="291.5" width="47.0" height="19.8" fill="#262a3c"/><text x="547.47" y="306.70" font-size="14.66" fill="#ffffff" textLength="25.56" lengthAdjust="spacingAndGlyphs">N/A</text><rect x="530.9" y="357.0" width="47.0" height="19.7" fill="#262a3c"/><text x="541.27" y="372.70" font-size="14.94" fill="#ffffff" textLength="25.66" lengthAdjust="spacingAndGlyphs">N/A</text><rect x="517.8" y="378.7" width="50.8" height="19.5" fill="#262a3c"/><text x="519.58" y="394.50" font-size="14.66" fill="#ffffff" textLength="46.54" lengthAdjust="spacingAndGlyphs">DEG F</text><rect x="529.7" y="440.5" width="32.3" height="20.0" fill="#262a3c"/><text x="530.91" y="456.00" font-size="15.36" fill="#ffffff" textLength="29.53" lengthAdjust="spacingAndGlyphs">N/.%</text><rect x="526.0" y="490.5" width="23.7" height="15.5" fill="#262a3c"/><text x="526.39" y="504.00" font-size="14.66" fill="#ffffff" textLength="23.14" lengthAdjust="spacingAndGlyphs">N/A</text><rect x="518.0" y="506.8" width="50.3" height="19.2" fill="#262a3c"/><text x="519.58" y="522.00" font-size="14.66" fill="#ffffff" textLength="46.54" lengthAdjust="spacingAndGlyphs">DEG F</text><rect x="398.6" y="379.4" width="34.9" height="14.5" fill="#262a3c"/><text x="398.77" y="390.60" font-size="12.01" fill="#0a0a0a" textLength="34.23" lengthAdjust="spacingAndGlyphs">FEED</text><rect x="398.6" y="395.7" width="39.2" height="15.2" fill="#262a3c"/><text x="398.74" y="407.60" font-size="12.57" fill="#0a0a0a" textLength="39.08" lengthAdjust="spacingAndGlyphs">FROM</text><rect x="398.6" y="412.7" width="42.6" height="14.5" fill="#262a3c"/><text x="398.30" y="423.30" font-size="12.29" fill="#0a0a0a" textLength="42.34" lengthAdjust="spacingAndGlyphs">REACT</text><path d="M405.4 445.0 L450.0 445.0" fill="none" stroke="#008000" stroke-width="2.2" stroke-linejoin="miter"/><path d="M463.4 445.0 L444.4 438.0 L444.4 452.0 Z" fill="#008000"/><path d="M405.4 517.3 L450.0 517.3" fill="none" stroke="#008000" stroke-width="2.2" stroke-linejoin="miter"/><path d="M463.4 517.3 L444.4 510.3 L444.4 524.3 Z" fill="#008000"/><rect x="401.7" y="520.4" width="24.0" height="14.8" fill="#262a3c"/><text x="403.24" y="532.00" font-size="13.55" fill="#0a0a0a" textLength="21.67" lengthAdjust="spacingAndGlyphs">40#</text><rect x="401.7" y="537.4" width="45.6" height="14.8" fill="#262a3c"/><text x="402.93" y="549.30" font-size="13.55" fill="#0a0a0a" textLength="43.54" lengthAdjust="spacingAndGlyphs">STEAM</text><path d="M647.9 168.0 L708.8 168.0 L708.8 144.4 L940.7 144.4 L940.7 129.5 L1062.0 129.5" fill="none" stroke="#008000" stroke-width="2.2" stroke-linejoin="miter"/><path d="M632.9 168.0 L651.9 161.0 L651.9 175.0 Z" fill="#008000"/><rect x="672.5" y="129.1" width="39.5" height="14.7" fill="#262a3c"/><text x="681.50" y="141.10" font-size="14.25" fill="#8c0a18" textLength="20.82" lengthAdjust="spacingAndGlyphs">N/A</text><rect x="661.7" y="151.1" width="41.2" height="15.2" fill="#262a3c"/><text x="662.99" y="162.90" font-size="13.69" fill="#a6a6a6" textLength="38.63" lengthAdjust="spacingAndGlyphs">DEG F</text><path d="M820.9 120.0 L747.6 120.0 L747.6 128.0" fill="none" stroke="#008000" stroke-width="2.2" stroke-linejoin="miter"/><path d="M748.0 146.3 L740.8 126.3 L755.2 126.3 Z" fill="#008000"/><rect x="831.2" y="116.1" width="41.6" height="14.8" fill="#262a3c"/><text x="833.27" y="127.80" font-size="13.27" fill="#0a0a0a" textLength="37.86" lengthAdjust="spacingAndGlyphs">Fat Oil</text><path d="M908.8 168.2 L860.5 168.2 L860.5 158.0" fill="none" stroke="#008000" stroke-width="2.2" stroke-linejoin="miter"/><path d="M860.5 142.2 L853.8 162.2 L867.2 162.2 Z" fill="#008000"/><rect x="894.1" y="109.3" width="20.9" height="14.4" fill="#262a3c"/><text x="893.91" y="121.10" font-size="13.69" fill="#8c0a18" textLength="20.61" lengthAdjust="spacingAndGlyphs">N/A</text><rect x="889.6" y="125.2" width="28.0" height="14.4" fill="#262a3c"/><text x="890.99" y="136.80" font-size="13.27" fill="#a6a6a6" textLength="25.89" lengthAdjust="spacingAndGlyphs">BPD</text><rect x="870.0" y="151.1" width="39.9" height="14.5" fill="#262a3c"/><text x="878.99" y="162.70" font-size="13.27" fill="#8c0a18" textLength="21.14" lengthAdjust="spacingAndGlyphs">N/A</text><rect x="876.1" y="169.4" width="27.8" height="14.4" fill="#262a3c"/><text x="877.29" y="180.40" font-size="12.43" fill="#a6a6a6" textLength="26.00" lengthAdjust="spacingAndGlyphs">BPD</text><ellipse cx="978.3" cy="130.1" rx="5" ry="1.3" fill="#008000"/><path d="M963.6999999999999 121.8 L978.3 128.1 L963.6999999999999 134.4 Z M992.9 121.8 L978.3 128.1 L992.9 134.4 Z" fill="url(#vbody)"/><rect x="976.6999999999999" y="116.0" width="3.2" height="11.8" fill="#f2f2f2"/><path d="M977.0999999999999 116.0 V128.2 M979.5 116.0 V128.2" stroke="#555" stroke-width="0.9"/><path d="M966.5999999999999 116.0 A11.7 10 0 0 1 990.0 116.0 Z" fill="url(#dome)"/><rect x="1010.6" y="106.3" width="59.4" height="14.4" fill="#262a3c"/><text x="1012.85" y="118.00" font-size="13.27" fill="#0a0a0a" textLength="55.72" lengthAdjust="spacingAndGlyphs">LN Oil to</text><rect x="920.4" y="149.7" width="27.0" height="14.6" fill="#262a3c"/><text x="922.57" y="161.70" font-size="13.69" fill="#8c0a18" textLength="22.95" lengthAdjust="spacingAndGlyphs">Gas</text><rect x="919.1" y="168.1" width="29.8" height="14.7" fill="#262a3c"/><text x="921.32" y="180.00" font-size="13.27" fill="#8c0a18" textLength="25.61" lengthAdjust="spacingAndGlyphs">Slop</text><path d="M654.0 192.5 L756.0 192.5 L756.0 167.5 L836.6 167.5 L836.6 184.0" fill="none" stroke="#008000" stroke-width="2.2" stroke-linejoin="miter"/><path d="M635.3 192.5 L654.3 185.5 L654.3 199.5 Z" fill="#008000"/><rect x="767.0" y="177.3" width="33.6" height="14.1" fill="#262a3c"/><text x="769.98" y="189.10" font-size="13.97" fill="#0a0a0a" textLength="26.92" lengthAdjust="spacingAndGlyphs">LGO</text><rect x="763.6" y="192.8" width="35.1" height="14.7" fill="#262a3c"/><text x="764.03" y="204.80" font-size="12.99" fill="#0a0a0a" textLength="33.62" lengthAdjust="spacingAndGlyphs">STRP</text><rect x="680.0" y="196.8" width="59.7" height="14.6" fill="#262a3c"/><text x="680.83" y="208.60" font-size="13.41" fill="#8c0a18" textLength="18.09" lengthAdjust="spacingAndGlyphs">N/A</text><text x="699.58" y="208.60" font-size="13.41" fill="#a6a6a6" textLength="38.94" lengthAdjust="spacingAndGlyphs">DEG F</text><path d="M634.3 228.8 L795.0 228.8" fill="none" stroke="#008000" stroke-width="2.2" stroke-linejoin="miter"/><path d="M813.5 229.0 L794.5 222.0 L794.5 236.0 Z" fill="#008000"/><path d="M761.6 228.8 L761.6 289.3 L1062.0 289.3" fill="none" stroke="#008000" stroke-width="2.2" stroke-linejoin="miter"/><path d="M811 187.3 Q815.75 182.3 834.75 182.3 Q853.75 182.3 858.5 187.3 L858.5 237.8 Q834.75 242.8 811 237.8 Z" fill="url(#tank)"/><rect x="829.3" y="191.2" width="23.5" height="42.5" fill="none" stroke="#008000" stroke-width="2.6"/><path d="M840.9 241.0 L840.9 274.9 L967.8 274.9 L967.8 233.5 L1015.0 233.5 L1015.0 307.6 L1062.0 307.6" fill="none" stroke="#008000" stroke-width="2.2" stroke-linejoin="miter"/><path d="M861.0 232.0 L890.0 232.0" fill="none" stroke="#008000" stroke-width="2.2" stroke-linejoin="miter"/><path d="M907.3 232.0 L887.8 225.0 L887.8 239.0 Z" fill="#008000"/><rect x="866.5" y="206.4" width="40.5" height="14.2" fill="#262a3c"/><text x="869.14" y="217.70" font-size="13.55" fill="#0a0a0a" textLength="36.18" lengthAdjust="spacingAndGlyphs">Steam</text><path d="M917.3 274.8 L917.3 205.1 L1062.0 205.1" fill="none" stroke="#008000" stroke-width="2.2" stroke-linejoin="miter"/><ellipse cx="946.2" cy="205.7" rx="5" ry="1.3" fill="#008000"/><path d="M931.6 197.39999999999998 L946.2 203.7 L931.6 210.0 Z M960.8000000000001 197.39999999999998 L946.2 203.7 L960.8000000000001 210.0 Z" fill="url(#vbody)"/><rect x="944.6" y="191.6" width="3.2" height="11.8" fill="#f2f2f2"/><path d="M945.0 191.6 V203.79999999999998 M947.4000000000001 191.6 V203.79999999999998" stroke="#555" stroke-width="0.9"/><path d="M934.5 191.6 A11.7 10 0 0 1 957.9000000000001 191.6 Z" fill="url(#dome)"/><ellipse cx="990.6" cy="234.1" rx="5" ry="1.3" fill="#008000"/><path d="M976.0 225.79999999999998 L990.6 232.1 L976.0 238.4 Z M1005.2 225.79999999999998 L990.6 232.1 L1005.2 238.4 Z" fill="url(#vbody)"/><rect x="989.0" y="220.0" width="3.2" height="11.8" fill="#f2f2f2"/><path d="M989.4 220.0 V232.2 M991.8000000000001 220.0 V232.2" stroke="#555" stroke-width="0.9"/><path d="M978.9 220.0 A11.7 10 0 0 1 1002.3000000000001 220.0 Z" fill="url(#dome)"/><rect x="804.8" y="250.4" width="24.0" height="14.0" fill="#262a3c"/><rect x="815.0" y="255.0" width="15.5" height="14.0" fill="#262a3c"/><text x="804.94" y="263.50" font-size="14.66" fill="#8c0a18" textLength="25.01" lengthAdjust="spacingAndGlyphs">N/%</text><rect x="699.0" y="241.3" width="21.0" height="14.4" fill="#262a3c"/><text x="699.02" y="253.30" font-size="13.69" fill="#8c0a18" textLength="20.51" lengthAdjust="spacingAndGlyphs">N/A</text><rect x="682.3" y="258.8" width="44.9" height="14.9" fill="#262a3c"/><text x="683.91" y="271.00" font-size="13.97" fill="#a6a6a6" textLength="41.65" lengthAdjust="spacingAndGlyphs">DEG F</text><path d="M633.0 357.0 L960.0 357.0 L960.0 392.6" fill="none" stroke="#008000" stroke-width="2.2" stroke-linejoin="miter"/><path d="M705.6 357.0 L705.6 437.6 L652.6 437.6" fill="none" stroke="#008000" stroke-width="2.2" stroke-linejoin="miter"/><path d="M633.0 437.6 L652.0 430.6 L652.0 444.6 Z" fill="#008000"/><path d="M655.8 413.7 L834.5 413.7 L834.5 454.4 L1001.8 454.4 L1001.8 393.3 L981.5 393.3" fill="none" stroke="#008000" stroke-width="2.2" stroke-linejoin="miter"/><path d="M637.0 413.7 L656.0 406.7 L656.0 420.7 Z" fill="#008000"/><path d="M897.8 454.4 L897.8 409.6 L886.0 409.6" fill="none" stroke="#008000" stroke-width="2.2" stroke-linejoin="miter"/><rect x="669.4" y="372.5" width="31.3" height="15.0" fill="#262a3c"/><text x="670.27" y="384.80" font-size="13.41" fill="#8c0a18" textLength="29.45" lengthAdjust="spacingAndGlyphs">HGO</text><rect x="675.9" y="391.0" width="22.9" height="14.7" fill="#262a3c"/><text x="677.46" y="403.00" font-size="11.17" fill="#8c0a18" textLength="19.48" lengthAdjust="spacingAndGlyphs">P/D</text><path d="M808.8 357.0 L808.8 385.2 L864.4 385.2 L864.4 409.0" fill="none" stroke="#008000" stroke-width="2.2" stroke-linejoin="miter"/><ellipse cx="838.5" cy="385.8" rx="5" ry="1.3" fill="#008000"/><path d="M823.9 377.5 L838.5 383.8 L823.9 390.1 Z M853.1 377.5 L838.5 383.8 L853.1 390.1 Z" fill="url(#vbody)"/><rect x="836.9" y="371.7" width="3.2" height="11.8" fill="#f2f2f2"/><path d="M837.3 371.7 V383.9 M839.7 371.7 V383.9" stroke="#555" stroke-width="0.9"/><path d="M826.8 371.7 A11.7 10 0 0 1 850.2 371.7 Z" fill="url(#dome)"/><rect x="859.3" y="421" width="30.5" height="18" fill="#b2b2b2" stroke="#a2a2a2" stroke-width="1"/><path d="M862.3 408 L862.5999999999999 435.5 L869.9 426.5 L874.3 435.3 L878.9 426.5 L886.3 435.5 L886.3 408" fill="none" stroke="#404040" stroke-width="2.6" stroke-linejoin="round"/><rect x="955.4" y="405" width="30.5" height="18" fill="#b2b2b2" stroke="#a2a2a2" stroke-width="1"/><path d="M958.4 392 L958.6999999999999 419.5 L966.0 410.5 L970.4 419.3 L975.0 410.5 L982.4 419.5 L982.4 392" fill="none" stroke="#404040" stroke-width="2.6" stroke-linejoin="round"/><rect x="764.2" y="392.3" width="47.8" height="14.5" fill="#262a3c"/><text x="764.34" y="403.80" font-size="12.99" fill="#8c0a18" textLength="19.98" lengthAdjust="spacingAndGlyphs">N/A</text><text x="784.36" y="403.80" font-size="12.99" fill="#a6a6a6" textLength="26.85" lengthAdjust="spacingAndGlyphs">BPD</text><rect x="750.4" y="434.7" width="57.5" height="15.0" fill="#262a3c"/><text x="750.07" y="446.50" font-size="13.27" fill="#8c0a18" textLength="21.46" lengthAdjust="spacingAndGlyphs">N/A</text><rect x="768.8" y="434.7" width="39.1" height="15.0" fill="#262a3c"/><text x="769.36" y="446.50" font-size="13.27" fill="#a6a6a6" textLength="37.58" lengthAdjust="spacingAndGlyphs">MBPD</text><rect x="910.7" y="372.7" width="20.7" height="13.9" fill="#262a3c"/><text x="910.88" y="384.50" font-size="10.47" fill="#8c0a18" textLength="19.14" lengthAdjust="spacingAndGlyphs">N/A</text><rect x="905.4" y="388.2" width="40.2" height="14.0" fill="#262a3c"/><text x="906.97" y="399.50" font-size="12.71" fill="#a6a6a6" textLength="37.06" lengthAdjust="spacingAndGlyphs">MBPD</text><rect x="908.0" y="416.3" width="40.8" height="14.6" fill="#262a3c"/><text x="910.13" y="427.30" font-size="12.71" fill="#0a0a0a" textLength="36.80" lengthAdjust="spacingAndGlyphs">Steam</text><rect x="911.3" y="431.1" width="26.7" height="13.4" fill="#262a3c"/><text x="912.77" y="441.30" font-size="12.01" fill="#0a0a0a" textLength="23.96" lengthAdjust="spacingAndGlyphs">Gen</text><rect x="1026.3" y="382.0" width="20.5" height="14.3" fill="#262a3c"/><text x="1026.01" y="393.60" font-size="12.71" fill="#8c0a18" textLength="20.61" lengthAdjust="spacingAndGlyphs">N/A</text><rect x="1015.2" y="398.0" width="39.7" height="14.6" fill="#262a3c"/><text x="1016.89" y="409.70" font-size="12.85" fill="#a6a6a6" textLength="36.43" lengthAdjust="spacingAndGlyphs">MBPD</text><rect x="1016.3" y="416.3" width="29.7" height="14.3" fill="#262a3c"/><text x="1018.45" y="427.30" font-size="12.71" fill="#0a0a0a" textLength="25.17" lengthAdjust="spacingAndGlyphs">Stab</text><rect x="1016.3" y="433.0" width="34.6" height="14.2" fill="#262a3c"/><text x="1018.49" y="444.00" font-size="12.85" fill="#0a0a0a" textLength="30.16" lengthAdjust="spacingAndGlyphs">Reblr</text><rect x="1057" y="415" width="6" height="117" fill="#1e1e1e" stroke="#f0f0f0" stroke-width="1"/><path d="M650.4 453.7 L745.7 453.7 L745.7 548.9" fill="none" stroke="#008000" stroke-width="2.2" stroke-linejoin="miter"/><path d="M631.3 453.7 L650.3 446.7 L650.3 460.7 Z" fill="#008000"/><ellipse cx="724" cy="454.40000000000003" rx="5" ry="1.3" fill="#008000"/><path d="M709.4 446.1 L724 452.40000000000003 L709.4 458.70000000000005 Z M738.6 446.1 L724 452.40000000000003 L738.6 458.70000000000005 Z" fill="url(#vbody)"/><rect x="722.4" y="440.3" width="3.2" height="11.8" fill="#f2f2f2"/><path d="M722.8 440.3 V452.5 M725.2 440.3 V452.5" stroke="#555" stroke-width="0.9"/><path d="M712.3 440.3 A11.7 10 0 0 1 735.7 440.3 Z" fill="url(#dome)"/><path d="M658.0 477.6 L889.6 477.6 L889.6 487.0" fill="none" stroke="#008000" stroke-width="2.2" stroke-linejoin="miter"/><path d="M638.6 477.8 L658.0 470.7 L658.0 484.9 Z" fill="#008000"/><rect x="668.3" y="477.4" width="20.6" height="14.3" fill="#262a3c"/><text x="667.91" y="488.90" font-size="12.85" fill="#8c0a18" textLength="20.61" lengthAdjust="spacingAndGlyphs">N/A</text><rect x="653.8" y="492.3" width="39.6" height="14.8" fill="#262a3c"/><text x="655.29" y="503.90" font-size="12.99" fill="#a6a6a6" textLength="36.43" lengthAdjust="spacingAndGlyphs">MBPD</text><path d="M648.0 510.6 L745.7 510.6" fill="none" stroke="#008000" stroke-width="2.2" stroke-linejoin="miter"/><path d="M630.0 510.6 L648.0 503.6 L648.0 517.6 Z" fill="#008000"/><ellipse cx="722.4" cy="511.40000000000003" rx="5" ry="1.3" fill="#008000"/><path d="M707.8 503.1 L722.4 509.40000000000003 L707.8 515.7 Z M737.0 503.1 L722.4 509.40000000000003 L737.0 515.7 Z" fill="url(#vbody)"/><rect x="720.8" y="497.3" width="3.2" height="11.8" fill="#f2f2f2"/><path d="M721.1999999999999 497.3 V509.5 M723.6 497.3 V509.5" stroke="#555" stroke-width="0.9"/><path d="M710.6999999999999 497.3 A11.7 10 0 0 1 734.1 497.3 Z" fill="url(#dome)"/><rect x="680.9" y="516.9" width="54.8" height="14.8" fill="#262a3c"/><text x="683.13" y="528.90" font-size="13.69" fill="#0a0a0a" textLength="50.00" lengthAdjust="spacingAndGlyphs">Stm Gen</text><path d="M552.9 532.0 L552.9 548.9 L683.0 548.9" fill="none" stroke="#008000" stroke-width="2.2" stroke-linejoin="miter"/><path d="M700.0 548.9 L681.2 542.3 L681.2 555.5 Z" fill="#008000"/><rect x="650.0" y="528.5" width="20.9" height="14.9" fill="#262a3c"/><text x="650.12" y="540.90" font-size="13.69" fill="#8c0a18" textLength="20.51" lengthAdjust="spacingAndGlyphs">N/A</text><rect x="638.0" y="550.0" width="40.9" height="14.0" fill="#262a3c"/><text x="639.29" y="560.90" font-size="13.27" fill="#a6a6a6" textLength="38.63" lengthAdjust="spacingAndGlyphs">DEG F</text><rect x="697.9" y="561.9" width="30.5" height="18" fill="#b2b2b2" stroke="#a2a2a2" stroke-width="1"/><path d="M700.9 548.9 L701.1999999999999 576.4 L708.5 567.4 L712.9 576.1999999999999 L717.5 567.4 L724.9 576.4 L724.9 548.9" fill="none" stroke="#404040" stroke-width="2.6" stroke-linejoin="round"/><path d="M724.9 548.9 L812.6 548.9 L812.6 510.4 L845.0 510.4" fill="none" stroke="#008000" stroke-width="2.2" stroke-linejoin="miter"/><ellipse cx="828" cy="510.6" rx="5" ry="1.3" fill="#008000"/><path d="M813.4 502.3 L828 508.6 L813.4 514.9 Z M842.6 502.3 L828 508.6 L842.6 514.9 Z" fill="url(#vbody)"/><rect x="826.4" y="496.5" width="3.2" height="11.8" fill="#f2f2f2"/><path d="M826.8 496.5 V508.7 M829.2 496.5 V508.7" stroke="#555" stroke-width="0.9"/><path d="M816.3 496.5 A11.7 10 0 0 1 839.7 496.5 Z" fill="url(#dome)"/><path d="M863.2 509.8 L844.2 502.8 L844.2 516.8 Z" fill="#008000"/><path d="M861.6 491.4 Q866.97 486.4 888.45 486.4 Q909.93 486.4 915.3 491.4 L915.3 542.8 Q888.45 547.8 861.6 542.8 Z" fill="url(#tank)"/><rect x="880.8" y="494.4" width="23.90000000000009" height="45.80000000000007" fill="none" stroke="#008000" stroke-width="2.6"/><path d="M892.5 545.6 L892.5 582.3 L1062.0 582.3" fill="none" stroke="#008000" stroke-width="2.2" stroke-linejoin="miter"/><ellipse cx="959.6" cy="582.9" rx="5" ry="1.3" fill="#008000"/><path d="M945.0 574.6 L959.6 580.9 L945.0 587.1999999999999 Z M974.2 574.6 L959.6 580.9 L974.2 587.1999999999999 Z" fill="url(#vbody)"/><rect x="958.0" y="568.8" width="3.2" height="11.8" fill="#f2f2f2"/><path d="M958.4 568.8 V581.0 M960.8000000000001 568.8 V581.0" stroke="#555" stroke-width="0.9"/><path d="M947.9 568.8 A11.7 10 0 0 1 971.3000000000001 568.8 Z" fill="url(#dome)"/><rect x="768.8" y="554.2" width="81.0" height="14.4" fill="#262a3c"/><line x1="808.5" y1="554.2" x2="808.5" y2="568.6" stroke="#3a3e50" stroke-width="1"/><text x="777.99" y="566.00" font-size="13.27" fill="#8c0a18" textLength="21.04" lengthAdjust="spacingAndGlyphs">N/A</text><text x="809.99" y="566.00" font-size="13.27" fill="#a6a6a6" textLength="38.52" lengthAdjust="spacingAndGlyphs">DEG F</text><rect x="930.8" y="474.3" width="59.7" height="14.4" fill="#262a3c"/><text x="931.72" y="486.10" font-size="13.27" fill="#0a0a0a" textLength="57.66" lengthAdjust="spacingAndGlyphs">Decanted</text><rect x="926.3" y="490.4" width="19.9" height="14.7" fill="#262a3c"/><text x="927.66" y="502.50" font-size="13.69" fill="#0a0a0a" textLength="17.51" lengthAdjust="spacingAndGlyphs">Oil</text><rect x="930.8" y="506.5" width="50.4" height="14.1" fill="#262a3c"/><text x="932.19" y="518.00" font-size="12.85" fill="#0a0a0a" textLength="47.23" lengthAdjust="spacingAndGlyphs">Stripper</text><rect x="939.0" y="524.7" width="21.0" height="13.7" fill="#262a3c"/><text x="940.14" y="535.80" font-size="12.29" fill="#8c0a18" textLength="17.88" lengthAdjust="spacingAndGlyphs">N/A</text><rect x="1050.0" y="541.5" width="20.0" height="14.5" fill="#262a3c"/><text x="1051.22" y="553.50" font-size="13.27" fill="#0a0a0a" textLength="11.53" lengthAdjust="spacingAndGlyphs">D</text><rect x="1056.2" y="560.4" width="13.8" height="14.9" fill="#262a3c"/><text x="1057.22" y="572.50" font-size="13.27" fill="#0a0a0a" textLength="11.60" lengthAdjust="spacingAndGlyphs">S</text></g><rect x="1062" y="97" width="8" height="490" fill="#1e1e1e"/><rect x="1062" y="97" width="8" height="481.5" rx="4" fill="#6a7fb4"/><rect x="1062" y="97" width="8" height="10" fill="#6a7fb4"/><rect x="372" y="587" width="690" height="8" fill="#1e1e1e"/><rect x="372" y="587" width="570" height="8" rx="4" fill="#6a7fb4"/><rect x="372" y="587" width="10" height="8" fill="#6a7fb4"/><rect x="1062" y="587" width="8" height="8" fill="#fff"/></svg>
</body></html>
